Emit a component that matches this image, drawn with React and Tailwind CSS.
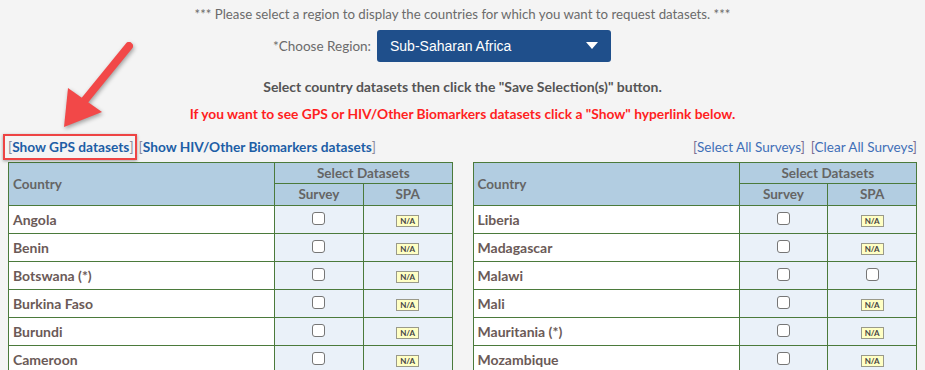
import React from 'react';

const left = [
  { name: 'Angola', spa: false },
  { name: 'Benin', spa: false },
  { name: 'Botswana (*)', spa: false },
  { name: 'Burkina Faso', spa: false },
  { name: 'Burundi', spa: false },
  { name: 'Cameroon', spa: false },
];

const right = [
  { name: 'Liberia', spa: false },
  { name: 'Madagascar', spa: false },
  { name: 'Malawi', spa: true },
  { name: 'Mali', spa: false },
  { name: 'Mauritania (*)', spa: false },
  { name: 'Mozambique', spa: false },
];

function Box() {
  return <span className="inline-block w-[13px] h-[13px] mb-[3px] rounded-[3px] border border-[#767676] bg-white align-middle" />;
}

function NA() {
  return (
    <span className="inline-block bg-[#ffffc4] border border-[#9a9a8a] px-[3px] leading-[10px] text-[8px] font-bold text-[#444] align-middle">
      N/A
    </span>
  );
}

function CountryTable({ rows }) {
  const cell = 'border border-[#4b7a3b]';
  return (
    <table className="w-full border-collapse">
      <thead>
        <tr className="bg-[#b2cde1] text-[#656565] font-bold text-[13.5px]">
          <th rowSpan={2} className={`${cell} text-left pl-1 w-[60%]`}>Country</th>
          <th colSpan={2} className={`${cell} h-[20px]`}>Select Datasets</th>
        </tr>
        <tr className="bg-[#b2cde1] text-[#656565] font-bold text-[13.5px]">
          <th className={`${cell} h-[21px] w-[20%]`}>Survey</th>
          <th className={`${cell} w-[20%]`}>SPA</th>
        </tr>
      </thead>
      <tbody>
        {rows.map((r) => (
          <tr key={r.name} className="h-[28px]">
            <td className={`${cell} bg-white pl-1 text-[14px] font-bold text-[#6b5a57]`}>{r.name}</td>
            <td className={`${cell} bg-[#eaf1f9] text-center leading-none`}><Box /></td>
            <td className={`${cell} bg-[#eaf1f9] text-center leading-none`}>{r.spa ? <Box /> : <NA />}</td>
          </tr>
        ))}
      </tbody>
    </table>
  );
}

export default function App() {
  return (
    <div className="relative w-[925px] h-[370px] overflow-hidden bg-[#f4f4f4] font-['Lato',sans-serif]">
      <div className="pt-[5px] text-center text-[13.25px] leading-[18px] text-[#6b6b6b]">
        *** Please select a region to display the countries for which you want to request datasets. ***
      </div>

      <div className="mt-[7px] flex items-center justify-center gap-[6px] pr-[41px]">
        <span className="text-[13.5px] text-[#6b6b6b]">*Choose Region:</span>
        <div className="w-[234px] h-[32px] rounded-[3px] bg-[#1f4f8b] flex items-center justify-between px-[13px] font-['Liberation_Sans',sans-serif]">
          <span className="text-white text-[14px]">Sub-Saharan Africa</span>
          <svg width="12" height="8" viewBox="0 0 12 8"><path d="M0 0h12L6 7z" fill="#fff" /></svg>
        </div>
      </div>

      <div className="mt-[15px] text-center text-[14px] leading-[20px] font-bold text-[#555]">
        Select country datasets then click the "Save Selection(s)" button.
      </div>
      <div className="mt-[7px] text-center text-[13.8px] leading-[20px] font-bold text-[#ff1f1f]">
        If you want to see GPS or HIV/Other Biomarkers datasets click a "Show" hyperlink below.
      </div>

      <div className="mt-[13px] px-2 h-[20px] flex items-center justify-between text-[13.7px]">
        <div className="flex items-center">
          <span className="relative">
            <span className="text-[#8a8a9a]">[</span>
            <span className="font-bold text-[#1d5ea6]">Show GPS datasets</span>
            <span className="text-[#8a8a9a]">]</span>
            <span className="absolute -left-[5px] -right-[3px] -top-[3px] -bottom-[3px] border-2 border-[#ee4444] shadow-[0_1px_3px_rgba(0,0,0,0.35)]" />
          </span>
          <span className="ml-[5px] text-[#8a8a9a]">[</span>
          <span className="font-bold text-[#1d5ea6]">Show HIV/Other Biomarkers datasets</span>
          <span className="text-[#8a8a9a]">]</span>
        </div>
        <div className="flex items-center gap-[6px] text-[13.5px] text-[#3f6fb7]">
          <span><span className="text-[#7a6e92]">[</span>Select All Surveys<span className="text-[#7a6e92]">]</span></span>
          <span><span className="text-[#7a6e92]">[</span>Clear All Surveys<span className="text-[#7a6e92]">]</span></span>
        </div>
      </div>

      <div className="mt-[5px] px-2 grid grid-cols-2 gap-5">
        <CountryTable rows={left} />
        <CountryTable rows={right} />
      </div>

      <svg className="absolute left-[55px] top-[38px] drop-shadow-[1px_2px_2px_rgba(0,0,0,0.35)]" width="90" height="96" viewBox="0 0 90 96">
        <line x1="74" y1="8" x2="30" y2="62" stroke="#f24848" strokeWidth="8" strokeLinecap="round" />
        <path d="M9 89 L13 50 L47 74 Z" fill="#f24848" />
      </svg>
    </div>
  );
}
